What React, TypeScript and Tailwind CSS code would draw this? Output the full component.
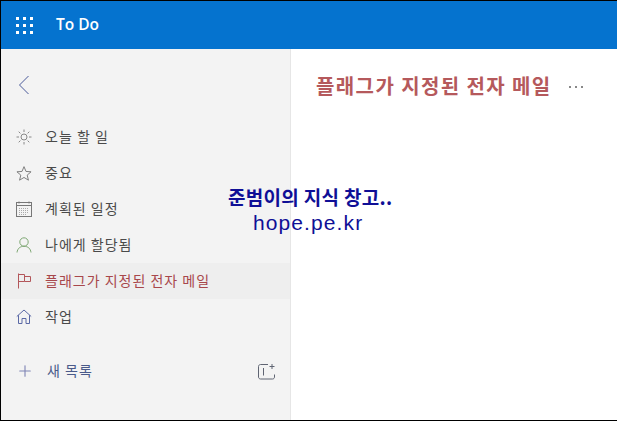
import { Plus } from 'lucide-react';

const font = { fontFamily: '"Noto Sans CJK KR", "Open Sans", sans-serif' };

const Sun = () => (
  <svg width="16" height="16" viewBox="0 0 16 16" fill="none" stroke="#888" strokeWidth="1">
    <circle cx="8" cy="8" r="3" />
    <path d="M8 0.5V3M8 13V15.5M0.5 8H3M13 8H15.5M2.7 2.7L4.4 4.4M11.6 11.6L13.3 13.3M2.7 13.3L4.4 11.6M11.6 4.4L13.3 2.7" />
  </svg>
);

const Star = () => (
  <svg width="17" height="17" viewBox="0 0 17 17" fill="none" stroke="#777" strokeWidth="1">
    <path d="M8.5 1.2L10.6 6.3L16 6.7L11.9 10.2L13.2 15.6L8.5 12.7L3.8 15.6L5.1 10.2L1 6.7L6.4 6.3Z" />
  </svg>
);

const Calendar = () => (
  <svg width="16" height="16" viewBox="0 0 16 16" fill="none" stroke="#777" strokeWidth="1">
    <rect x="0.5" y="1.5" width="15" height="14" />
    <path d="M1 4.5H15" />
    <path d="M3 0.5V2.5M13 0.5V2.5" />
    <path d="M3 7.5H13M3 9.5H13M3 11.5H13M3 13.5H10" strokeDasharray="1 1" stroke="#aaa" />
  </svg>
);

const Person = () => (
  <svg width="16" height="16" viewBox="0 0 16 16" fill="none" stroke="#7fa874" strokeWidth="1">
    <circle cx="8" cy="5" r="4.2" />
    <path d="M1 15.5C1.5 11.5 4 9.3 8 9.3C12 9.3 14.5 11.5 15 15.5" />
  </svg>
);

const Flag = () => (
  <svg width="15" height="16" viewBox="0 0 15 16" fill="none" stroke="#b3565a" strokeWidth="1">
    <path d="M1.5 0.5V15.5" />
    <path d="M1.5 1.5H7.5V8.5H1.5M7.5 3.5H13.5V8.5H7.5" />
  </svg>
);

const Home = () => (
  <svg width="16" height="16" viewBox="0 0 16 16" fill="none" stroke="#5a68a5" strokeWidth="1">
    <path d="M0.8 7.5L8 1L15.2 7.5M2.5 6.2V14.5H6V9.5H10V14.5H13.5V6.2" />
  </svg>
);

const NewGroup = () => (
  <svg width="17" height="17" viewBox="0 0 17 17" fill="none" stroke="#5f6472" strokeWidth="1">
    <path d="M10 1.5H2.5C1.5 1.5 0.5 2.3 0.5 3.5V14C0.5 15.2 1.5 16 2.5 16H14.5C15.7 16 16.5 15.2 16.5 14V11.5" />
    <path d="M5.5 5V12.5" />
    <path d="M14 1V6M11.5 3.5H16.5" />
  </svg>
);

const items = [
  { label: '오늘 할 일', icon: <Sun /> },
  { label: '중요', icon: <Star /> },
  { label: '계획된 일정', icon: <Calendar /> },
  { label: '나에게 할당됨', icon: <Person /> },
  { label: '플래그가 지정된 전자 메일', icon: <Flag />, active: true },
  { label: '작업', icon: <Home /> },
];

export default function App() {
  return (
    <div
      className="relative flex h-[421px] w-[617px] flex-col overflow-hidden border border-r-0 border-black bg-white"
      style={font}
    >
      {/* Top bar */}
      <header className="flex h-[48px] shrink-0 items-center bg-[#0573cf] pl-[15px] text-white">
        <div className="grid grid-cols-3 gap-[4px]">
          {Array.from({ length: 9 }).map((_, i) => (
            <span key={i} className="h-[3px] w-[3px] bg-white" />
          ))}
        </div>
        <span className="ml-[23px] text-[15.5px] font-semibold" style={{ fontFamily: '"Open Sans", sans-serif' }}>
          To Do
        </span>
      </header>

      <div className="flex min-h-0 flex-1">
        {/* Sidebar */}
        <aside className="flex w-[290px] shrink-0 flex-col border-r border-[#e6e6e6] bg-[#f3f3f3]">
          <div className="flex h-[70px] items-center pl-[17px] pt-[2px]">
            <svg width="12" height="20" viewBox="0 0 12 20" fill="none" stroke="#4a5a9a" strokeWidth="1">
              <path d="M10.5 1L1.5 10L10.5 19" />
            </svg>
          </div>
          <nav className="flex flex-col">
            {items.map((item) => (
              <div
                key={item.label}
                className={`flex h-[36px] items-center pl-[15px] text-[14px] ${
                  item.active ? 'bg-[#eeeeee] text-[#a8474b]' : 'text-[#4a4a4a]'
                }`}
              >
                <span className="flex w-[16px] justify-center">{item.icon}</span>
                <span className="ml-[13px] -translate-y-px tracking-[1px]">{item.label}</span>
              </div>
            ))}
          </nav>
          <div className="mt-[18px] flex h-[36px] items-center pl-[15px] pr-[15px] text-[14px] text-[#4a5a8a]">
            <Plus size={18} strokeWidth={1.5} className="text-[#7f85b5]" />
            <span className="ml-[13px] -translate-y-px tracking-[1px]">새 목록</span>
            <span className="ml-auto">
              <NewGroup />
            </span>
          </div>
        </aside>

        {/* Main */}
        <main className="flex flex-1 items-start pl-[25px] pt-[19px]">
          <h1 className="text-[20px] leading-[36px] font-bold tracking-[1.4px] text-[#b5595c]">
            플래그가 지정된 전자 메일
          </h1>
          <span className="ml-[17px] flex h-[36px] items-center gap-[4px] pt-[2px]">
            <span className="h-[2px] w-[2px] bg-[#888]" />
            <span className="h-[2px] w-[2px] bg-[#888]" />
            <span className="h-[2px] w-[2px] bg-[#888]" />
          </span>
        </main>
      </div>

      {/* Watermark */}
      <div className="absolute left-[227px] top-[181px] text-[#0f0f96]">
        <div className="text-[19px] leading-[30px] font-bold tracking-[0.3px] whitespace-nowrap">준범이의 지식 창고..</div>
        <div
          className="pl-[25px] text-[21px] leading-[22px] tracking-[1.1px] whitespace-nowrap"
          style={{ fontFamily: '"Liberation Sans", sans-serif' }}
        >
          hope.pe.kr
        </div>
      </div>
    </div>
  );
}
